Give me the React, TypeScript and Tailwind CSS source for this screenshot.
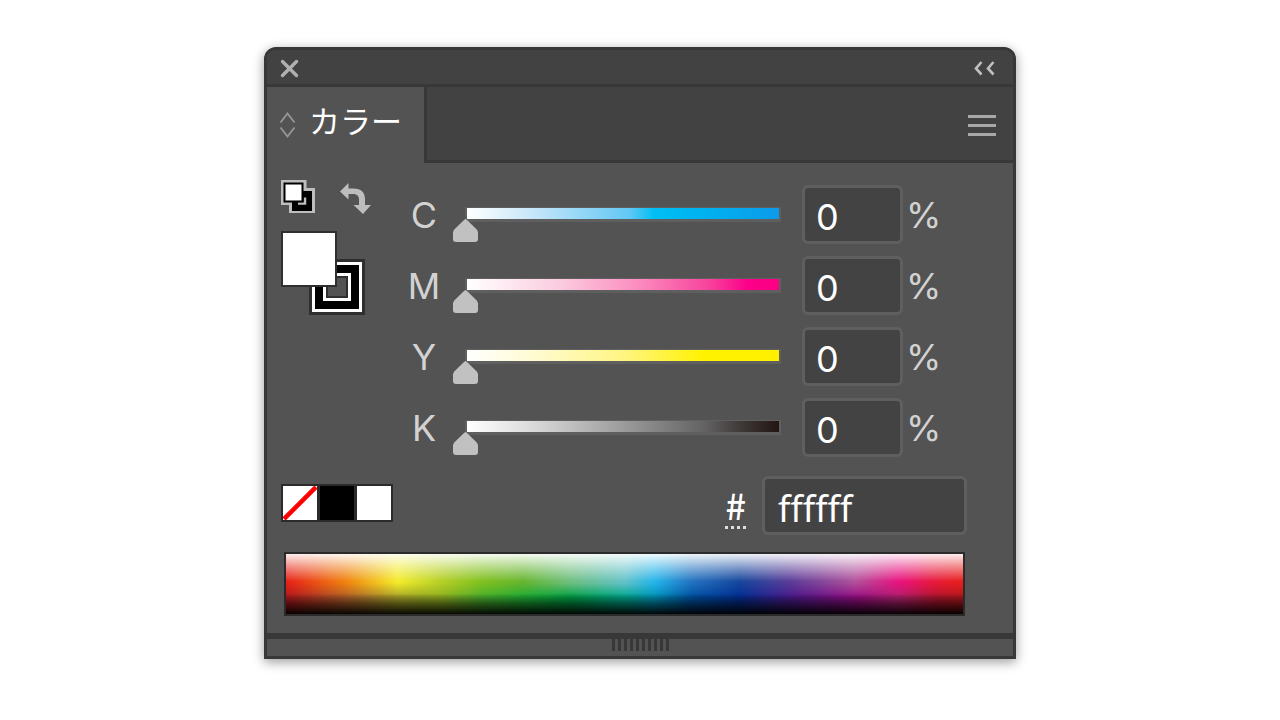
import React, { useState } from 'react';

interface Channel {
  name: string;
  track: string;
}

const channels: Channel[] = [
  { name: 'C', track: 'bg-[linear-gradient(to_right,#ffffff_0%,#c4e5f9_22%,#62c8f5_52%,#00bff3_60%,#00b2f0_75%,#0c9bea_100%)]' },
  { name: 'M', track: 'bg-[linear-gradient(to_right,#ffffff_0%,#fbcbdf_30%,#fb8fc0_54%,#f7419b_78%,#fb0089_90%,#fb0083_100%)]' },
  { name: 'Y', track: 'bg-[linear-gradient(to_right,#ffffff_0%,#fffbd0_22%,#fff583_50%,#fff200_76%,#fff000_100%)]' },
  { name: 'K', track: 'bg-[linear-gradient(to_right,#ffffff_0%,#d8d8d8_22%,#a0a0a0_48%,#636363_76%,#3e3836_88%,#231613_100%)]' },
];

const upperHues = [
  ['0', '#e71f19'], ['0.09', '#f0850f'], ['0.165', '#f3ec2c'], ['0.23', '#b4cf26'],
  ['0.29', '#7fc01f'], ['0.35', '#66b52e'], ['0.42', '#6fbf80'], ['0.5', '#63c2c8'],
  ['0.545', '#24b4ea'], ['0.6', '#2272bf'], ['0.67', '#16469d'], ['0.745', '#5a3c98'],
  ['0.84', '#b0509a'], ['0.905', '#e9127f'], ['0.96', '#e81a3a'], ['1', '#e71f19'],
];

const lowerHues = [
  ['0', '#b0181c'], ['0.09', '#b0602a'], ['0.165', '#a8a428'], ['0.23', '#8fb020'],
  ['0.29', '#4aaf2c'], ['0.35', '#1eac34'], ['0.42', '#009e44'], ['0.5', '#00a78c'],
  ['0.545', '#0092b8'], ['0.6', '#0050a2'], ['0.67', '#022e92'], ['0.745', '#4a1a8c'],
  ['0.84', '#960d84'], ['0.905', '#b0206c'], ['0.96', '#b0142c'], ['1', '#b0181c'],
];

const Spectrum: React.FC = () => (
  <svg className="block h-[60px] w-full" viewBox="0 0 677 60" preserveAspectRatio="none" role="img" aria-label="スペクトル">
    <defs>
      <linearGradient id="upper">
        {upperHues.map(([offset, color]) => <stop key={offset} offset={offset} stopColor={color} />)}
      </linearGradient>
      <linearGradient id="lower">
        {lowerHues.map(([offset, color]) => <stop key={offset} offset={offset} stopColor={color} />)}
      </linearGradient>
      <linearGradient id="blend" x2="0" y2="1">
        <stop offset="0.48" stopColor="#000" />
        <stop offset="0.72" stopColor="#fff" />
      </linearGradient>
      <linearGradient id="shade" x2="0" y2="1">
        <stop offset="0" stopColor="#fff" stopOpacity="0.92" />
        <stop offset="0.2" stopColor="#fff" stopOpacity="0.5" />
        <stop offset="0.46" stopColor="#fff" stopOpacity="0" />
        <stop offset="0.66" stopColor="#000" stopOpacity="0" />
        <stop offset="0.82" stopColor="#000" stopOpacity="0.5" />
        <stop offset="1" stopColor="#000" stopOpacity="0.94" />
      </linearGradient>
      <mask id="fade">
        <rect width="677" height="60" fill="url(#blend)" />
      </mask>
    </defs>
    <rect width="677" height="60" fill="url(#upper)" />
    <rect width="677" height="60" fill="url(#lower)" mask="url(#fade)" />
    <rect width="677" height="60" fill="url(#shade)" />
  </svg>
);

const ChannelRow: React.FC<Channel> = ({ name, track }) => {
  const [value, setValue] = useState('0');

  return (
    <div className="flex h-[59px]">
      <label htmlFor={`slider-${name}`} className="w-9 text-center leading-[60px] text-[#d2d2d2]">{name}</label>
      <div className="ml-[11px] grid flex-1 content-start pt-[23px]">
        <div className={`col-start-1 row-start-1 mx-[14px] h-[11px] shadow-[0_1px_0_2px_#5f5f5f] ${track}`} />
        <input
          id={`slider-${name}`}
          type="range"
          min="0"
          max="100"
          value={value}
          onChange={(e) => setValue(e.target.value)}
          className="col-start-1 row-start-1 mt-[11px] h-[23px] w-full appearance-none bg-transparent [&::-webkit-slider-thumb]:h-[23px] [&::-webkit-slider-thumb]:w-[25px] [&::-webkit-slider-thumb]:appearance-none [&::-webkit-slider-thumb]:rounded-b-[3px] [&::-webkit-slider-thumb]:bg-[#c1c1c1] [&::-webkit-slider-thumb]:[clip-path:polygon(50%_0,56%_4%,95%_46%,100%_56%,100%_100%,0_100%,0_56%,5%_46%,44%_4%)]"
        />
      </div>
      <input
        id={`value-${name}`}
        type="text"
        aria-label={`${name} %`}
        value={value}
        onChange={(e) => setValue(e.target.value)}
        className="ml-[9px] w-[101px] rounded-md border-3 border-[#5f5f5f] bg-[#434343] pt-[5px] pl-[11px] text-white outline-none"
      />
      <label htmlFor={`value-${name}`} className="ml-[3px] w-[61px] leading-[60px] text-[#d2d2d2]">%</label>
    </div>
  );
};

const App: React.FC = () => {
  const [hex, setHex] = useState('ffffff');

  return (
    <div className="min-h-screen bg-white pt-[47px] font-['Inter','Noto_Sans_CJK_JP',sans-serif] text-[36px]">
      <div className="mx-auto max-w-[752px] rounded-t-xl border-3 border-[#383838] bg-[#535353] shadow-[0_3px_12px_rgba(0,0,0,0.4)]">
        {/* Title bar */}
        <div className="flex h-[37px] items-center justify-between rounded-t-[9px] border-b-3 border-[#383838] bg-[#424242] pt-[3px] pr-[18px] pl-[13px]">
          <button type="button" aria-label="閉じる">
            <svg className="block" width="19" height="19" viewBox="0 0 19 19" stroke="#b0b0b0" strokeWidth="3.4" strokeLinecap="round">
              <path d="M2.500 2.500l14 14M16.500 2.500l-14 14" />
            </svg>
          </button>
          <button type="button" aria-label="折りたたむ">
            <svg className="block" width="22" height="15" viewBox="0 0 22 15" fill="none" stroke="#c0c0c0" strokeWidth="2.600">
              <path d="M8.500 1L3 7.500l5.500 6M20.500 1L15 7.500l5.500 6" />
            </svg>
          </button>
        </div>

        {/* Tabs */}
        <div className="flex h-[76px]">
          <button type="button" className="flex w-[157px] items-center gap-[13px] pl-[12px] text-[31px] text-white">
            <svg width="17" height="26" viewBox="0 0 17 26" fill="none" stroke="#979797" strokeWidth="1.800">
              <path d="M1.500 10.500L8.500 1.500l7 9M1.500 15.500l7 9 7-9" />
            </svg>
            <span className="-mt-2 leading-none">カラー</span>
          </button>
          <div className="flex flex-1 items-center justify-end border-b-3 border-l-3 border-[#383838] bg-[#424242] pt-[3px] pr-[17px]">
            <button type="button" aria-label="メニュー" className="flex w-7 flex-col gap-[6px]">
              <span className="h-[3px] bg-[#a8a8a8]" />
              <span className="h-[3px] bg-[#a8a8a8]" />
              <span className="h-[3px] bg-[#a8a8a8]" />
            </button>
          </div>
        </div>

        <div className="pt-[17px] pr-[46px] pb-[17px] pl-[14px]">
          <div className="flex">
            {/* Fill and stroke */}
            <div className="w-[125px]">
              <div className="flex items-start gap-6">
                <button type="button" aria-label="初期設定の塗りと線">
                  <svg className="block" width="34" height="34" viewBox="0 0 34 34">
                    <path d="M0 0h25.500v8H34v25H8v-8H0z" fill="#bdbdbd" />
                    <path d="M11 11h20v20H11z" fill="#000" />
                    <path d="M17 23.500h7v-6" fill="none" stroke="#bdbdbd" strokeWidth="2.500" />
                    <path d="M2.500 2.500h20v20h-20z" fill="#000" />
                    <path d="M4.500 4.500h16v16h-16z" fill="#fff" />
                  </svg>
                </button>
                <button type="button" aria-label="塗りと線を入れ替え" className="pt-[3px]">
                  <svg className="block" width="33" height="32" viewBox="0 0 33 32">
                    <path d="M1 8.500L9.500 0v5.500h5C22 5.500 26 9.500 26 16v6h6L24 31l-9.500-9H20v-5c0-4-2-6-6-6H9.500v5.500z" fill="#bdbdbd" />
                  </svg>
                </button>
              </div>
              <div className="relative mt-4 h-[84px] w-[84px]">
                <button type="button" aria-label="線" className="absolute right-0 bottom-0 size-14 border-3 border-[#2f2f2f] bg-white p-[3px]">
                  <span className="block size-full bg-black p-[8px]">
                    <span className="block size-full border-3 border-white bg-[#535353] shadow-[inset_0_0_0_2px_#2f2f2f]" />
                  </span>
                </button>
                <button type="button" aria-label="塗り" className="absolute top-0 left-0 size-14 border-2 border-[#2f2f2f] bg-white" />
              </div>
            </div>

            <div className="flex flex-1 flex-col gap-3 pt-[5px]">
              {channels.map((channel) => (
                <ChannelRow key={channel.name} {...channel} />
              ))}
            </div>
          </div>

          <div className="mt-[19px] flex items-start justify-between">
            <div className="mt-2 flex gap-[3px] border-2 border-[#2b2b2b] bg-[#2b2b2b]">
              <button type="button" aria-label="なし" className="size-[34px] bg-white">
                <svg className="block" width="34" height="34" viewBox="0 0 34 34">
                  <path d="M1 33L33 1" stroke="#f00" strokeWidth="4.500" />
                </svg>
              </button>
              <button type="button" aria-label="ブラック" className="size-[34px] bg-black" />
              <button type="button" aria-label="ホワイト" className="size-[34px] bg-white" />
            </div>
            <div className="flex h-[59px] items-center gap-4 text-white">
              <label htmlFor="hex" className="mt-1 border-b-3 border-dotted border-[#dddddd] pb-1 font-['Noto_Sans_CJK_JP',sans-serif] leading-9 font-medium">#</label>
              <input
                id="hex"
                type="text"
                value={hex}
                onChange={(e) => setHex(e.target.value)}
                className="h-[59px] w-[205px] rounded-md border-3 border-[#5f5f5f] bg-[#434343] pt-[5px] pl-[13px] font-['Noto_Sans',sans-serif] outline-none"
              />
            </div>
          </div>

          <div className="mt-[17px] mr-[2px] ml-[3px] border-2 border-[#2b2b2b]">
            <Spectrum />
          </div>
        </div>

        {/* Resize grip */}
        <div className="flex h-[23px] justify-center border-t-6 border-[#383838]">
          <div className="h-3 w-[57px] bg-[repeating-linear-gradient(to_right,#383838_0_3px,transparent_3px_6px)]" />
        </div>
      </div>
    </div>
  );
};

export default App;
